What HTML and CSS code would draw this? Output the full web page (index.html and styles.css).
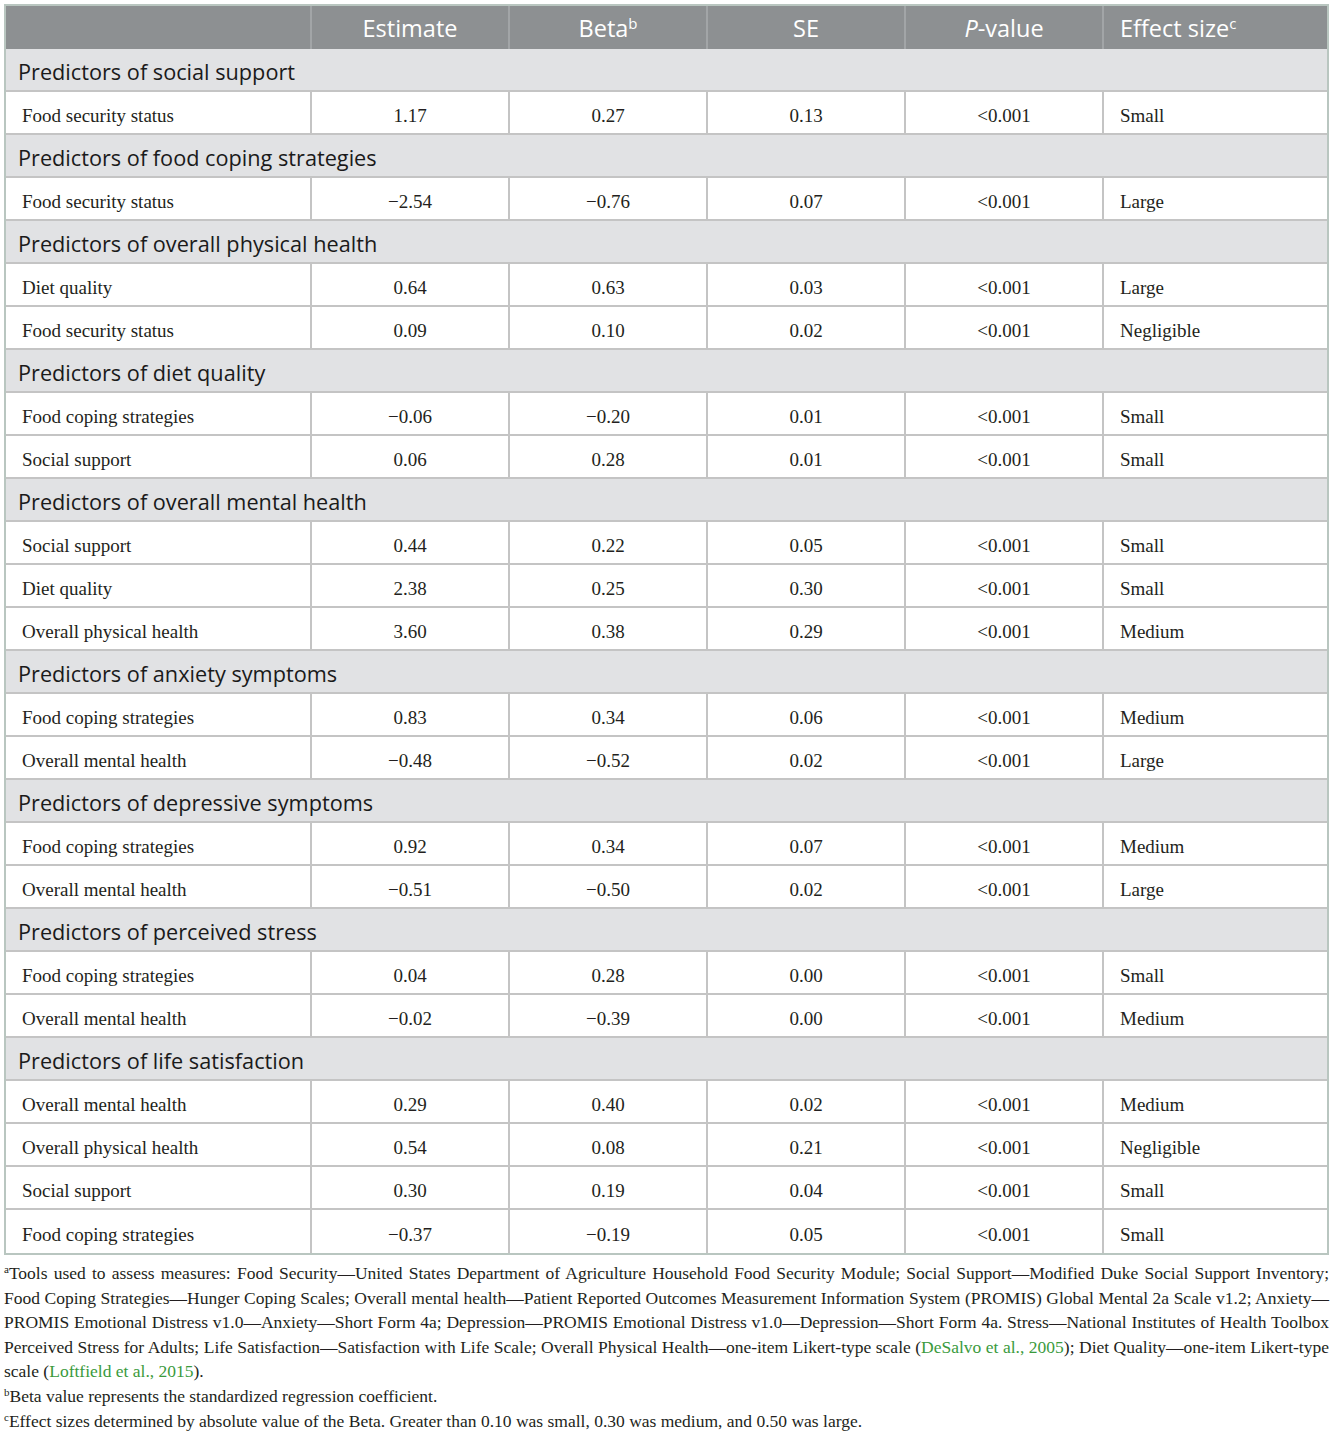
FILE: index.html
```html
<!DOCTYPE html>
<html lang="en">
<head>
    <meta charset="UTF-8">
    <title>Predictors table</title>
    <link rel="stylesheet" href="styles.css">
</head>
<body>
<div id="wrap">
    <table class="results">
        <thead>
        <tr>
            <th class="first"></th>
            <th>Estimate</th>
            <th>Beta<sup>b</sup></th>
            <th>SE</th>
            <th><i>P</i>-value</th>
            <th class="left">Effect size<sup>c</sup></th>
        </tr>
        </thead>
        <tbody>
        <tr class="group"><td colspan="6">Predictors of social support</td></tr>
        <tr><td>Food security status</td><td>1.17</td><td>0.27</td><td>0.13</td><td>&lt;0.001</td><td>Small</td></tr>

        <tr class="group"><td colspan="6">Predictors of food coping strategies</td></tr>
        <tr><td>Food security status</td><td>&minus;2.54</td><td>&minus;0.76</td><td>0.07</td><td>&lt;0.001</td><td>Large</td></tr>

        <tr class="group"><td colspan="6">Predictors of overall physical health</td></tr>
        <tr><td>Diet quality</td><td>0.64</td><td>0.63</td><td>0.03</td><td>&lt;0.001</td><td>Large</td></tr>
        <tr><td>Food security status</td><td>0.09</td><td>0.10</td><td>0.02</td><td>&lt;0.001</td><td>Negligible</td></tr>

        <tr class="group"><td colspan="6">Predictors of diet quality</td></tr>
        <tr><td>Food coping strategies</td><td>&minus;0.06</td><td>&minus;0.20</td><td>0.01</td><td>&lt;0.001</td><td>Small</td></tr>
        <tr><td>Social support</td><td>0.06</td><td>0.28</td><td>0.01</td><td>&lt;0.001</td><td>Small</td></tr>

        <tr class="group"><td colspan="6">Predictors of overall mental health</td></tr>
        <tr><td>Social support</td><td>0.44</td><td>0.22</td><td>0.05</td><td>&lt;0.001</td><td>Small</td></tr>
        <tr><td>Diet quality</td><td>2.38</td><td>0.25</td><td>0.30</td><td>&lt;0.001</td><td>Small</td></tr>
        <tr><td>Overall physical health</td><td>3.60</td><td>0.38</td><td>0.29</td><td>&lt;0.001</td><td>Medium</td></tr>

        <tr class="group"><td colspan="6">Predictors of anxiety symptoms</td></tr>
        <tr><td>Food coping strategies</td><td>0.83</td><td>0.34</td><td>0.06</td><td>&lt;0.001</td><td>Medium</td></tr>
        <tr><td>Overall mental health</td><td>&minus;0.48</td><td>&minus;0.52</td><td>0.02</td><td>&lt;0.001</td><td>Large</td></tr>

        <tr class="group"><td colspan="6">Predictors of depressive symptoms</td></tr>
        <tr><td>Food coping strategies</td><td>0.92</td><td>0.34</td><td>0.07</td><td>&lt;0.001</td><td>Medium</td></tr>
        <tr><td>Overall mental health</td><td>&minus;0.51</td><td>&minus;0.50</td><td>0.02</td><td>&lt;0.001</td><td>Large</td></tr>

        <tr class="group"><td colspan="6">Predictors of perceived stress</td></tr>
        <tr><td>Food coping strategies</td><td>0.04</td><td>0.28</td><td>0.00</td><td>&lt;0.001</td><td>Small</td></tr>
        <tr><td>Overall mental health</td><td>&minus;0.02</td><td>&minus;0.39</td><td>0.00</td><td>&lt;0.001</td><td>Medium</td></tr>

        <tr class="group"><td colspan="6">Predictors of life satisfaction</td></tr>
        <tr><td>Overall mental health</td><td>0.29</td><td>0.40</td><td>0.02</td><td>&lt;0.001</td><td>Medium</td></tr>
        <tr><td>Overall physical health</td><td>0.54</td><td>0.08</td><td>0.21</td><td>&lt;0.001</td><td>Negligible</td></tr>
        <tr><td>Social support</td><td>0.30</td><td>0.19</td><td>0.04</td><td>&lt;0.001</td><td>Small</td></tr>
        <tr><td>Food coping strategies</td><td>&minus;0.37</td><td>&minus;0.19</td><td>0.05</td><td>&lt;0.001</td><td>Small</td></tr>
        </tbody>
    </table>

    <div class="notes">
        <p class="justify"><sup>a</sup>Tools used to assess measures: Food Security&mdash;United States Department of Agriculture Household Food Security Module; Social Support&mdash;Modified Duke Social Support Inventory; Food Coping Strategies&mdash;Hunger Coping Scales; Overall mental health&mdash;Patient Reported Outcomes Measurement Information System (PROMIS) Global Mental 2a Scale v1.2; Anxiety&mdash;PROMIS Emotional Distress v1.0&mdash;Anxiety&mdash;Short Form 4a; Depression&mdash;PROMIS Emotional Distress v1.0&mdash;Depression&mdash;Short Form 4a. Stress&mdash;National Institutes of Health Toolbox Perceived Stress for Adults; Life Satisfaction&mdash;Satisfaction with Life Scale; Overall Physical Health&mdash;one-item Likert-type scale (<a href="#">DeSalvo et al., 2005</a>); Diet Quality&mdash;one-item Likert-type scale (<a href="#">Loftfield et al., 2015</a>).</p>
        <p><sup>b</sup>Beta value represents the standardized regression coefficient.</p>
        <p><sup>c</sup>Effect sizes determined by absolute value of the Beta. Greater than 0.10 was small, 0.30 was medium, and 0.50 was large.</p>
    </div>
</div>
</body>
</html>
```

FILE: styles.css
```css
* {
    padding: 0;
    margin: 0;
    box-sizing: border-box;
}

body {
    background-color: #fff;
    color: #231f20;
}

#wrap {
    width: 1333px;
    padding: 4px;
}

/* separate borders so every row is exactly 43px */
.results {
    width: 1325px;
    border-collapse: separate;
    border-spacing: 0;
    table-layout: fixed;
    border: 2px solid #b9c6c0;
}

.results th {
    height: 43px;
    background-color: #8d9092;
    color: #fff;
    font-family: "Open Sans", sans-serif;
    font-size: 23.5px;
    font-weight: normal;
    text-align: center;
    border-left: 2px solid #a2a5a7;
    width: 198px;
}

.results th.first {
    width: 304px;
    border-left: none;
}

.results th.left {
    width: auto;
    text-align: left;
    padding-left: 16px;
}

.results th sup {
    font-size: 15px;
    vertical-align: 8px;
    line-height: 0;
}

.results td {
    height: 43px;
    border-left: 2px solid #c4c4c4;
    border-bottom: 2px solid #c4c4c4;
    font-family: "Liberation Serif", serif;
    font-size: 19px;
    text-align: center;
    padding-top: 6px;
}

.results td:first-child {
    text-align: left;
    padding-left: 16px;
    border-left: none;
}

.results td:last-child {
    text-align: left;
    padding-left: 16px;
}

.results tr:last-child td {
    border-bottom: none;
}

.results tr.group td {
    background-color: #e1e2e4;
    font-family: "Open Sans", sans-serif;
    font-size: 21.7px;
    text-align: left;
    padding-left: 12px;
    padding-top: 4px;
    border-left: none;
    color: #1a1a1a;
}

.notes {
    font-family: "Liberation Serif", serif;
    font-size: 17.5px;
    line-height: 24.6px;
    padding-top: 6px;
}

.notes .justify {
    text-align: justify;
}

.notes sup {
    font-size: 11px;
    vertical-align: 6px;
    line-height: 0;
}

.notes a {
    color: #3a9a3c;
    text-decoration: none;
}
```
